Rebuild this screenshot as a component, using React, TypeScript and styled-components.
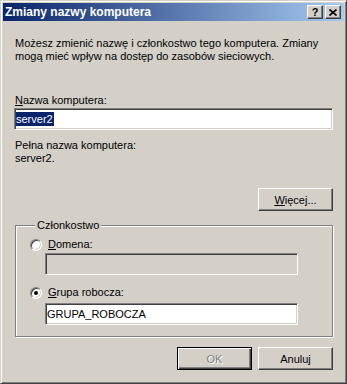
import React from 'react';
import styled, { createGlobalStyle, css } from 'styled-components';

const GlobalStyle = createGlobalStyle`
  html, body {
    margin: 0;
    padding: 0;
    background: #d4d0c8;
  }
  body {
    font-family: "Liberation Sans", Arial, sans-serif;
    font-size: 11px;
    line-height: 13px;
    color: #000;
  }
`;

const Window = styled.div`
  width: 347px;
  height: 384px;
  box-sizing: border-box;
  background: #d4d0c8;
  border: 1px solid;
  border-color: #d4d0c8 #404040 #404040 #d4d0c8;
  box-shadow: inset 1px 1px 0 #fff, inset -1px -1px 0 #808080;
  padding: 2px;
  display: flex;
  flex-direction: column;
`;

const TitleBar = styled.div`
  height: 18px;
  display: flex;
  align-items: center;
  padding: 0 3px 0 2px;
  background: linear-gradient(to right, #0a246a, #a6caf0);
`;

const Title = styled.div`
  flex: 1;
  color: #fff;
  font-weight: bold;
  font-size: 12px;
`;

const CaptionButtons = styled.div`
  display: flex;
  gap: 2px;
`;

const CaptionButton = styled.div`
  width: 16px;
  height: 14px;
  box-sizing: border-box;
  background: #d4d0c8;
  border: 1px solid;
  border-color: #fff #404040 #404040 #fff;
  box-shadow: inset -1px -1px 0 #808080;
  display: flex;
  align-items: center;
  justify-content: center;
  font-weight: bold;
  font-size: 11px;
  line-height: 11px;
`;

const Body = styled.div`
  flex: 1;
  display: flex;
  flex-direction: column;
  padding: 0 11px;
`;

const Text = styled.div<{ $top?: number }>`
  margin-top: ${(p) => p.$top ?? 0}px;
  padding-left: 1px;
  white-space: nowrap;
`;

const EditBox = styled.div<{ $top?: number; $disabled?: boolean; $indent?: number; $width?: number }>`
  margin-top: ${(p) => p.$top ?? 0}px;
  margin-left: ${(p) => p.$indent ?? 0}px;
  ${(p) => p.$width && css`width: ${p.$width}px;`}
  height: 22px;
  box-sizing: border-box;
  border: 1px solid;
  border-color: #808080 #fff #fff #808080;
  box-shadow: inset 1px 1px 0 #404040, inset -1px -1px 0 #d4d0c8;
  background: ${(p) => (p.$disabled ? '#d4d0c8' : '#fff')};
  display: flex;
  align-items: center;
  padding: 0 1px;
  white-space: nowrap;
`;

const Selected = styled.span`
  background: #0a246a;
  color: #fff;
  line-height: 14px;
  padding-right: 1px;
`;

const PushButton = styled.button<{ $default?: boolean }>`
  width: 75px;
  height: 23px;
  box-sizing: border-box;
  padding: 0;
  margin: 0;
  font: 11px "Liberation Sans", Arial, sans-serif;
  color: #000;
  background: #d4d0c8;
  border: 1px solid;
  border-color: #fff #404040 #404040 #fff;
  box-shadow: inset -1px -1px 0 #808080;
  ${(p) =>
    p.$default &&
    css`
      border-color: #000;
      box-shadow: inset 1px 1px 0 #fff, inset -1px -1px 0 #404040, inset -2px -2px 0 #808080;
    `}
  &:disabled {
    color: #808080;
    text-shadow: 1px 1px 0 #fff;
  }
`;

const MoreRow = styled.div`
  margin-top: 23px;
  display: flex;
  justify-content: flex-end;
`;

const GroupBox = styled.fieldset`
  margin: 8px 0 0 1px;
  padding: 0 14px 11px 14px;
  min-inline-size: 0;
  border: 1px solid #808080;
  box-shadow: inset 1px 1px 0 #fff, 1px 1px 0 #fff;
`;

const Legend = styled.legend`
  margin-left: 5px;
  padding: 0 2px;
  background: #d4d0c8;
  line-height: 13px;
`;

const GroupInner = styled.div`
  display: flex;
  flex-direction: column;
`;

const RadioRow = styled.label<{ $top: number }>`
  margin-top: ${(p) => p.$top}px;
  height: 13px;
  display: flex;
  align-items: center;
  gap: 6px;
`;

const RadioMark = styled.span<{ $checked?: boolean }>`
  position: relative;
  width: 12px;
  height: 12px;
  box-sizing: border-box;
  border-radius: 50%;
  background: #fff;
  border: 1px solid;
  border-color: #808080 #fff #fff #808080;
  box-shadow: inset 1px 1px 0 #404040, inset -1px -1px 0 #d4d0c8;
  ${(p) =>
    p.$checked &&
    css`
      &::after {
        content: '';
        position: absolute;
        left: 3px;
        top: 3px;
        width: 4px;
        height: 4px;
        border-radius: 50%;
        background: #000;
      }
    `}
`;

const ButtonRow = styled.div`
  margin-top: 10px;
  display: flex;
  justify-content: flex-end;
  gap: 6px;
`;

export default function App() {
  return (
    <>
      <GlobalStyle />
      <Window>
        <TitleBar>
          <Title>Zmiany nazwy komputera</Title>
          <CaptionButtons>
            <CaptionButton>?</CaptionButton>
            <CaptionButton>
              <svg width="8" height="7" viewBox="0 0 8 7">
                <path d="M0.5 0.5 L7.5 6.5 M7.5 0.5 L0.5 6.5" stroke="#000" strokeWidth="1.6" />
              </svg>
            </CaptionButton>
          </CaptionButtons>
        </TitleBar>
        <Body>
          <Text $top={16}>
            Możesz zmienić nazwę i członkostwo tego komputera. Zmiany
            <br />
            mogą mieć wpływ na dostęp do zasobów sieciowych.
          </Text>
          <Text $top={31}>
            <u>N</u>azwa komputera:
          </Text>
          <EditBox $top={1}>
            <Selected>server2</Selected>
          </EditBox>
          <Text $top={9}>Pełna nazwa komputera:</Text>
          <Text>server2.</Text>
          <MoreRow>
            <PushButton>
              <u>W</u>ięcej...
            </PushButton>
          </MoreRow>
          <GroupBox>
            <Legend>Członkostwo</Legend>
            <GroupInner>
              <RadioRow $top={6}>
                <RadioMark />
                <span>
                  <u>D</u>omena:
                </span>
              </RadioRow>
              <EditBox $top={2} $indent={15} $width={253} $disabled />
              <RadioRow $top={11}>
                <RadioMark $checked />
                <span>
                  <u>G</u>rupa robocza:
                </span>
              </RadioRow>
              <EditBox $top={4} $indent={15} $width={253}>
                GRUPA_ROBOCZA
              </EditBox>
            </GroupInner>
          </GroupBox>
          <ButtonRow>
            <PushButton $default disabled>
              OK
            </PushButton>
            <PushButton>Anuluj</PushButton>
          </ButtonRow>
        </Body>
      </Window>
    </>
  );
}
